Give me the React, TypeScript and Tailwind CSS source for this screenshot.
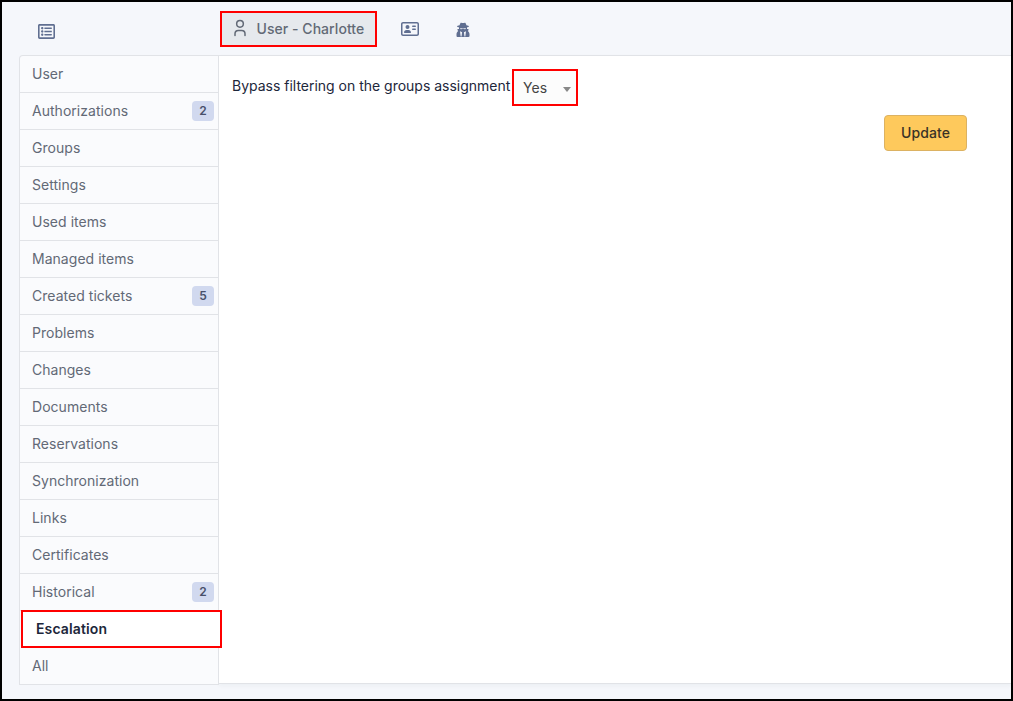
import { FaRegAddressCard } from "react-icons/fa6";
import { FaRegListAlt } from "react-icons/fa";
import { TbUser } from "react-icons/tb";

type Tab = { label: string; count?: number; active?: boolean };

const tabs: Tab[] = [
  { label: "User" },
  { label: "Authorizations", count: 2 },
  { label: "Groups" },
  { label: "Settings" },
  { label: "Used items" },
  { label: "Managed items" },
  { label: "Created tickets", count: 5 },
  { label: "Problems" },
  { label: "Changes" },
  { label: "Documents" },
  { label: "Reservations" },
  { label: "Synchronization" },
  { label: "Links" },
  { label: "Certificates" },
  { label: "Historical", count: 2 },
  { label: "Escalation", active: true },
  { label: "All" },
];

function ImpersonateIcon() {
  return (
    <svg width="14" height="16" viewBox="0 0 14 16" fill="currentColor" className="mt-[20px] ml-[37px]">
      <path d="M4.4 1.200C5 .4 6 1.100 7 1.100s2-.7 2.600.1c.4.500.7 1.300.8 2 1.500.200 2.600.600 2.600 1 0 .5-.8.900-2 1.100v1.800h.9c.5 0 .8.400.6.800l-.6 1.100c.9.800 1.600 1.900 1.600 3.200v1.900c0 .500-.4.900-.9.900H1.400c-.5 0-.9-.4-.9-.9v-1.900c0-1.300.7-2.400 1.600-3.200l-.6-1.100c-.2-.4.1-.8.6-.8H3V5.300c-1.200-.2-2-.6-2-1.100 0-.4 1.100-.8 2.600-1 .1-.7.400-1.500.8-2Z" />
      <path d="M4.100 6h2.100l.4.500h.8l.4-.5h2.100v.8c-.6.800-1.500.6-2 .1H6.100c-.5.500-1.400.7-2-.1Z" fill="#f5f7fb" opacity=".7" />
      <path d="M4 9.200 6.100 10.200 5.500 14.600H4.700Z M10 9.200 7.900 10.200 8.500 14.600H9.300Z" fill="#f5f7fb" />
    </svg>
  );
}

function Header() {
  return (
    <header className="flex h-[53px] shrink-0 items-start text-[#606f91]">
      <div className="w-[218px] shrink-0 pt-[21px] pl-[36px]">
        <FaRegListAlt size={17} />
      </div>
      <div className="mt-[9px] flex h-[36px] w-[157px] items-center border-2 border-[#ff0000] bg-[#e6e9ed] pl-[8px] text-[#626976]">
        <TbUser size={20} strokeWidth={1.8} className="mb-[3px]" />
        <span className="ml-[6.5px] whitespace-nowrap pb-px font-medium tracking-[0.05px]">User - Charlotte</span>
      </div>
      <FaRegAddressCard size={18} className="mt-[18px] ml-[24px]" />
      <ImpersonateIcon />
    </header>
  );
}

function TabRow({ label, count, active }: Tab) {
  if (active) {
    return (
      <li className="relative h-[37px]">
        <div className="absolute -top-px left-px flex h-[38px] w-[201px] items-center border-2 border-[#ff0000] bg-white pb-px pl-[13px] font-semibold tracking-[0.13px] text-[#1d273b]">
          {label}
        </div>
      </li>
    );
  }
  return (
    <li className="flex h-[37px] items-center justify-between border-b border-[#e1e3e7] pr-[4px] pl-[12px]">
      <span className="pb-[2px]">{label}</span>
      {count !== undefined && (
        <span className="flex h-[20px] w-[22px] items-center justify-center rounded-[4px] bg-[#d1d9ef] text-[12px] font-semibold text-[#48506a]">
          {count}
        </span>
      )}
    </li>
  );
}

export default function App() {
  return (
    <div className="flex h-[701px] w-[1013px] flex-col overflow-hidden border-2 border-black bg-[#f5f7fb] font-['Inter',sans-serif] text-[14px] tracking-[0.03px] text-[#626976]">
      <Header />
      <div className="flex items-start pl-[17px]">
        <ul className="z-10 w-[200px] shrink-0 rounded-tl-[4px] border border-b-0 border-[#e1e3e7] bg-[#fafbfd]">
          {tabs.map((tab) => (
            <TabRow key={tab.label} {...tab} />
          ))}
        </ul>
        <main className="h-[629px] grow border-y border-[#e1e3e7] bg-white shadow-[0_2px_4px_rgba(30,41,59,0.04)]">
          <div className="flex items-start pt-[13px] pl-[13px]">
            <label className="mt-[7px] w-[280px] whitespace-nowrap leading-[20px] tracking-[-0.01px] text-[#1d273b]">
              Bypass filtering on the groups assignment
            </label>
            <div className="flex h-[37px] w-[66px] items-center justify-between border-2 border-[#ff0000] bg-[#fcfcfc] pr-[5px] pl-[9px] text-[#444444]">
              Yes
              <span className="mt-[4px] border-x-[4px] border-t-[5px] border-x-transparent border-t-[#888888]" />
            </div>
          </div>
          <div className="mt-[9px] flex justify-end pr-[44px]">
            <button className="h-[36px] w-[83px] rounded-[4px] border border-[#dcb262] bg-[#fec95c] pb-[2px] font-medium tracking-[0.1px] text-[#3a3226]">
              Update
            </button>
          </div>
        </main>
      </div>
    </div>
  );
}
